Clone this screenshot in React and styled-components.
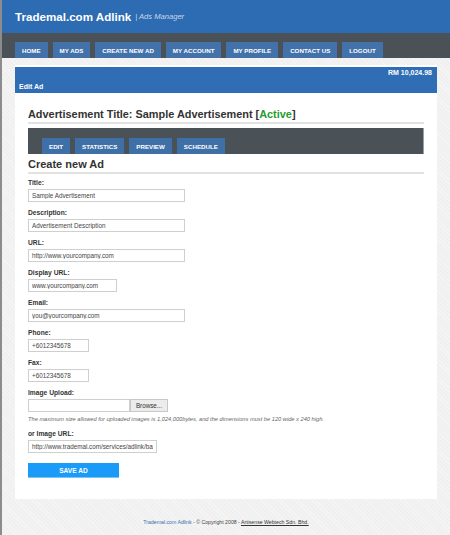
import React from "react";
import styled, { createGlobalStyle } from "styled-components";

const Global = createGlobalStyle`
  html, body { margin: 0; padding: 0; }
  body { font-family: "Liberation Sans", Arial, sans-serif; background: #efefef; }
  * { box-sizing: border-box; }
`;

const Page = styled.div`
  min-height: 535px;
  border-left: 2px solid #8c8c8c;
  background-color: #f0f0f0;
  background-image: repeating-linear-gradient(45deg, rgba(255,255,255,0.35) 0 1px, transparent 1px 3px);
  display: flex;
  flex-direction: column;
`;

const Header = styled.header`
  height: 33px;
  background: #2d6bb2;
  display: flex;
  align-items: center;
  padding-left: 13px;
`;

const Brand = styled.span`
  color: #fff;
  font-weight: bold;
  font-size: 11.6px;
`;

const Sub = styled.span`
  color: #c9d6ea;
  font-size: 7.6px;
  font-style: italic;
  margin-left: 4px;
`;

const Nav = styled.nav`
  height: 25px;
  background: #4a5257;
  display: flex;
  align-items: flex-end;
  gap: 5px;
  padding-left: 13px;
`;

const Tab = styled.a`
  height: 16px;
  display: flex;
  align-items: center;
  padding: 0 ${(p) => p.$pad || 7}px;
  background: ${(p) => p.$bg || "#4272a9"};
  color: #fff;
  font-weight: bold;
  font-size: ${(p) => p.$size || 6.2}px;
  text-transform: uppercase;
  white-space: nowrap;
`;

const Panel = styled.main`
  margin: 7px 13px 0 13px;
  background: #fff;
  padding: 2px 0 14px;
`;

const InfoBar = styled.div`
  background: #2f6db4;
  color: #fff;
  font-weight: bold;
  font-size: 7px;
  line-height: 9px;
  padding: 1px 5px 2px 4px;
  display: flex;
  flex-direction: column;
  gap: 5px;
`;

const Right = styled.div`
  text-align: right;
`;

const Content = styled.div`
  padding: 0 13px;
`;

const Heading = styled.h1`
  margin: 15px 0 0;
  font-size: 10.9px;
  line-height: 12px;
  color: #333;
  font-weight: bold;
  padding-bottom: 2px;
  border-bottom: 2px solid #e2e2e2;
`;

const Active = styled.span`
  color: #1f9d2e;
`;

const SubNav = styled.div`
  margin-top: 4px;
  height: 26px;
  background: #4a5257;
  border-right: 1px solid #9aa0a3;
  display: flex;
  align-items: flex-end;
  gap: 5px;
  padding-left: 14px;
`;

const SubHeading = styled.h2`
  margin: 4px 0 0;
  font-size: 11px;
  line-height: 13px;
  color: #333;
  font-weight: bold;
  padding-bottom: 1px;
  border-bottom: 2px solid #e2e2e2;
`;

const Form = styled.form`
  margin-top: 5px;
  display: flex;
  flex-direction: column;
`;

const Field = styled.div`
  display: flex;
  flex-direction: column;
  align-items: flex-start;
  margin-bottom: 7px;
`;

const Label = styled.label`
  font-size: 6.7px;
  line-height: 8px;
  font-weight: bold;
  color: #333;
  margin-bottom: 2px;
`;

const Input = styled.input`
  width: ${(p) => p.$w}px;
  height: 13px;
  border: 1px solid #cfcfcf;
  padding: 0 3px;
  font-family: "Liberation Sans", Arial, sans-serif;
  font-size: 6.3px;
  color: #444;
  background: #fff;
  outline: none;
`;

const UploadRow = styled.div`
  display: flex;
`;

const Browse = styled.button`
  width: 38px;
  height: 13px;
  border: 1px solid #c8c8c8;
  background: #ececec;
  font-family: "Liberation Sans", Arial, sans-serif;
  font-size: 6.3px;
  color: #333;
  padding: 0;
`;

const Note = styled.div`
  margin-top: 4px;
  font-size: 5.7px;
  line-height: 7px;
  font-style: italic;
  color: #666;
`;

const Save = styled.button`
  margin-top: 10px;
  width: 91px;
  height: 15px;
  background: #1a9bf7;
  border: none;
  border-bottom: 1px solid #7cc4f7;
  color: #fff;
  font-weight: bold;
  font-size: 6.6px;
  font-family: "Liberation Sans", Arial, sans-serif;
  padding: 0;
`;

const Footer = styled.footer`
  text-align: center;
  font-size: 5.2px;
  color: #444;
  padding-top: 20px;
`;

const FootLink = styled.a`
  color: ${(p) => (p.$blue ? "#3a6fb0" : "#333")};
  text-decoration: ${(p) => (p.$blue ? "none" : "underline")};
`;

const navItems = ["Home", "My Ads", "Create New Ad", "My Account", "My Profile", "Contact Us", "Logout"];
const subItems = ["Edit", "Statistics", "Preview", "Schedule"];

export default function App() {
  return (
    <>
      <Global />
      <Page>
        <Header>
          <Brand>Trademal.com Adlink</Brand>
          <Sub>| Ads Manager</Sub>
        </Header>
        <Nav>
          {navItems.map((n) => (
            <Tab key={n}>{n}</Tab>
          ))}
        </Nav>
        <Panel>
          <InfoBar>
            <Right>RM 10,024.98</Right>
            <div>Edit Ad</div>
          </InfoBar>
          <Content>
            <Heading>
              Advertisement Title: Sample Advertisement [<Active>Active</Active>]
            </Heading>
            <SubNav>
              {subItems.map((n) => (
                <Tab key={n} $bg="#3f6fa7" $pad={7} $size={6.2}>
                  {n}
                </Tab>
              ))}
            </SubNav>
            <SubHeading>Create new Ad</SubHeading>
            <Form onSubmit={(e) => e.preventDefault()}>
              <Field>
                <Label>Title:</Label>
                <Input $w={157} defaultValue="Sample Advertisement" />
              </Field>
              <Field>
                <Label>Description:</Label>
                <Input $w={157} defaultValue="Advertisement Description" />
              </Field>
              <Field>
                <Label>URL:</Label>
                <Input $w={157} defaultValue="http://www.yourcompany.com" />
              </Field>
              <Field>
                <Label>Display URL:</Label>
                <Input $w={89} defaultValue="www.yourcompany.com" />
              </Field>
              <Field>
                <Label>Email:</Label>
                <Input $w={157} defaultValue="you@yourcompany.com" />
              </Field>
              <Field>
                <Label>Phone:</Label>
                <Input $w={61} defaultValue="+6012345678" />
              </Field>
              <Field>
                <Label>Fax:</Label>
                <Input $w={61} defaultValue="+6012345678" />
              </Field>
              <Field>
                <Label>Image Upload:</Label>
                <UploadRow>
                  <Input $w={102} />
                  <Browse type="button">Browse...</Browse>
                </UploadRow>
                <Note>
                  The maximum size allowed for uploaded images is 1,024,000bytes, and the dimensions must be 120 wide x 240 high.
                </Note>
              </Field>
              <Field>
                <Label>or Image URL:</Label>
                <Input $w={129} defaultValue="http://www.trademal.com/services/adlink/banner.gif" />
                <Save type="submit">SAVE AD</Save>
              </Field>
            </Form>
          </Content>
        </Panel>
        <Footer>
          <FootLink $blue>Trademal.com Adlink</FootLink> - © Copyright 2008 -{" "}
          <FootLink>Artisense Webtech Sdn. Bhd.</FootLink>
        </Footer>
      </Page>
    </>
  );
}
